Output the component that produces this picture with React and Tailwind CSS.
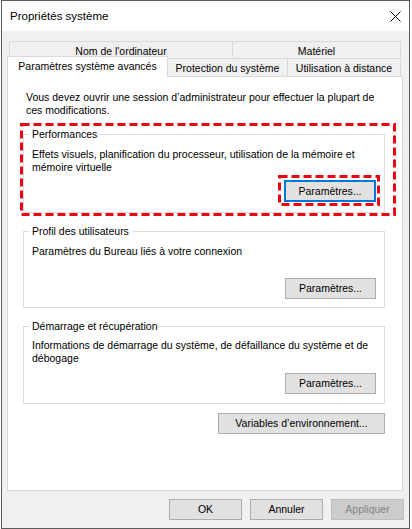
import React from "react";

const Btn = ({ children, className = "", focused = false, disabled = false }) => {
  const look = disabled
    ? "border border-[#bfbfbf] bg-[#cccccc] text-[#838383]"
    : focused
    ? "border-2 border-[#0078d7] bg-[#e1e1e1] text-black"
    : "border border-[#adadad] bg-[#e1e1e1] text-black";
  return (
    <button className={`flex items-center justify-center leading-[13px] ${look} ${className}`}>
      {children}
    </button>
  );
};

// red dashed annotation drawn over a box
const Marker = ({ w, h, className = "" }) => (
  <svg className={`pointer-events-none absolute ${className}`} width={w} height={h}>
    <rect x="1.5" y="1.5" width={w - 3} height={h - 3} fill="none" stroke="#e80612" strokeWidth="3" strokeDasharray="8 4" />
  </svg>
);

const Group = ({ title, children, className = "" }) => (
  <fieldset className={`w-[362px] border border-[#dcdcdc] ${className}`}>
    <legend className="ml-[5px] px-[3px] leading-[13px]">{title}</legend>
    {children}
  </fieldset>
);

export default function App() {
  return (
    <div className="h-[529px] w-[412px] bg-white font-['Liberation_Sans',Arial,sans-serif] text-[10.5px] leading-[13px] text-black">
      <div className="ml-px flex h-[529px] w-[409px] flex-col border border-[#5c5c5c] bg-[#f0f0f0]">
        {/* title bar */}
        <div className="flex h-[30px] items-center justify-between bg-white pl-[8px] pr-[8px]">
          <span className="pt-px text-[11.5px]">Propriétés système</span>
          <svg width="11" height="11" viewBox="0 0 11 11" className="mt-px">
            <path d="M0.5 0.5 L10.5 10.5 M10.5 0.5 L0.5 10.5" stroke="#000" strokeWidth="1" />
          </svg>
        </div>

        {/* tabs */}
        <div className="pl-[5px] pr-[6px] pt-[10px]">
          <div className="ml-[2px] flex h-[16px]">
            <div className="flex w-[224px] items-center justify-center border-x border-t border-[#d9d9d9] pt-[3px]">
              Nom de l'ordinateur
            </div>
            <div className="flex w-[168px] items-center justify-center border-r border-t border-[#d9d9d9] pt-[3px]">
              Matériel
            </div>
          </div>
          <div className="flex h-[19px] items-end">
            <div className="relative z-10 -mb-px flex h-[21px] w-[161px] items-center justify-center border-x border-t border-[#d9d9d9] bg-white pb-[1px]">
              Paramètres système avancés
            </div>
            <div className="flex h-[18px] w-[120px] items-center justify-center border-r border-t border-[#d9d9d9] pt-[2px]">
              Protection du système
            </div>
            <div className="flex h-[18px] w-[113px] items-center justify-center border-r border-t border-[#d9d9d9] pt-[2px]">
              Utilisation à distance
            </div>
          </div>

          {/* panel */}
          <div className="flex h-[415px] w-[396px] flex-col border border-[#d9d9d9] bg-white">
            <p className="whitespace-nowrap pl-[18px] pt-[14px]">
              Vous devez ouvrir une session d’administrateur pour effectuer la plupart de
              <br />
              ces modifications.
            </p>

            <div className="relative ml-[12px] mt-[6px] w-[376px] pb-[3px] pl-[3px] pr-[11px] pt-[5px]">
              <Group title="Performances">
                <div className="pb-[10px] pl-[8px] pr-[8px] pt-[7px]">
                  <p className="h-[26px] whitespace-nowrap">
                    Effets visuels, planification du processeur, utilisation de la mémoire et
                    <br />
                    mémoire virtuelle
                  </p>
                  <div className="mt-[6px] flex justify-end">
                    <div className="relative">
                      <Btn focused className="h-[22px] w-[92px]">Paramètres...</Btn>
                      <Marker w={102} h={31} className="-left-[6px] -top-[5px]" />
                    </div>
                  </div>
                </div>
              </Group>
              <Marker w={376} h={93} className="left-0 top-0" />
            </div>

            <div className="ml-[15px] mt-[9px] flex w-[362px] flex-col items-end">
              <Group title="Profil des utilisateurs">
                <div className="pb-[8px] pl-[8px] pr-[8px] pt-[7px]">
                  <p className="h-[26px] whitespace-nowrap">Paramètres du Bureau liés à votre connexion</p>
                  <div className="mt-[7px] flex justify-end">
                    <Btn className="h-[21px] w-[91px]">Paramètres...</Btn>
                  </div>
                </div>
              </Group>

              <Group title="Démarrage et récupération" className="mt-[12px]">
                <div className="pb-[9px] pl-[8px] pr-[8px] pt-[6px]">
                  <p className="h-[26px] whitespace-nowrap">
                    Informations de démarrage du système, de défaillance du système et de
                    <br />
                    débogage
                  </p>
                  <div className="mt-[8px] flex justify-end">
                    <Btn className="h-[21px] w-[91px]">Paramètres...</Btn>
                  </div>
                </div>
              </Group>

              <Btn className="mt-[9px] h-[21px] w-[167px]">Variables d’environnement...</Btn>
            </div>
          </div>
        </div>

        {/* footer */}
        <div className="flex justify-end gap-[8px] pr-[5px] pt-[8px]">
          <Btn className="h-[21px] w-[73px]">OK</Btn>
          <Btn className="h-[21px] w-[73px]">Annuler</Btn>
          <Btn disabled className="h-[21px] w-[73px]">Appliquer</Btn>
        </div>
      </div>
    </div>
  );
}
